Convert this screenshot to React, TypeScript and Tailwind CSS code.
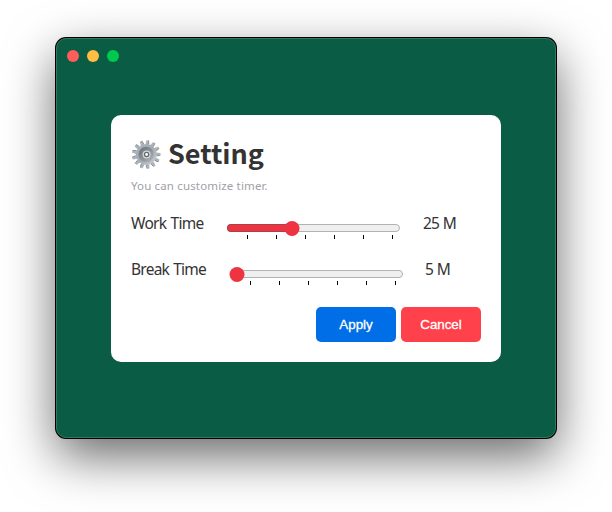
const KR = "font-['Noto_Sans','Noto_Sans_CJK_KR',sans-serif]";

const TEETH = Array.from({ length: 13 }, (_, i) => (i * 360) / 13 + 6);

function Gear() {
  return (
    <svg className="block h-[31px] w-[31px]" viewBox="0 0 31 31">
      <defs>
        <linearGradient id="rim" x1="0" y1="0" x2="1" y2="1">
          <stop offset="0" stopColor="#a9b4be" />
          <stop offset="0.5" stopColor="#a3abb2" />
          <stop offset="1" stopColor="#ccd1d5" />
        </linearGradient>
        <linearGradient id="dish" x1="0" y1="0" x2="1" y2="1">
          <stop offset="0" stopColor="#686d72" />
          <stop offset="0.5" stopColor="#8b9196" />
          <stop offset="1" stopColor="#b4babf" />
        </linearGradient>
      </defs>
      {TEETH.map((a) => (
        <g key={a} transform={`rotate(${a} 15.2 15.5)`}>
          <path d="M13.4 6 L13.9 1.2 H16.3 L17 6Z" fill="#a9b6c2" />
          <path d="M16.2 1.3 L16.8 5" stroke="#806c5c" strokeWidth="0.6" />
        </g>
      ))}
      <circle cx="15.2" cy="15.5" r="10.4" fill="url(#rim)" />
      <circle cx="15.2" cy="15.5" r="7.7" fill="url(#dish)" />
      <circle cx="15.6" cy="15.5" r="4" fill="#d3d9dd" />
      <circle cx="15.6" cy="15.5" r="2.1" fill="#fff" stroke="#666a6e" strokeWidth="1.3" />
    </svg>
  );
}

function Slider({ filled, thumb }: { filled: boolean; thumb: number }) {
  return (
    <div className="relative h-4 w-[173px] pt-1">
      <div className="h-2 overflow-hidden rounded-full border border-[#b2b2b2] bg-[#efefef]" />
      {filled && (
        <div
          className="absolute top-1 left-0 h-2 rounded-l-full border border-r-0 border-[#a3444c] bg-[#ee3440]"
          style={{ width: thumb }}
        />
      )}
      <div
        className="absolute top-[0.5px] h-[15px] w-[15px] -translate-x-1/2 rounded-full bg-[#ee3440]"
        style={{ left: thumb }}
      />
      <div className="absolute top-[15px] left-5 flex gap-7">
        {[0, 1, 2, 3, 4, 5].map((n) => (
          <i key={n} className="block h-1 w-px bg-black" />
        ))}
      </div>
    </div>
  );
}

export default function App() {
  return (
    <div className="h-[512px] w-[612px] overflow-hidden bg-white pt-[38px] pl-14">
      <main className="h-[400px] w-[500px] rounded-[10px] border border-[#37755f] bg-[#0b5c44] shadow-[0_0_0_1px_#000,0_18px_50px_rgba(0,0,0,0.6)]">
        <div className="flex gap-2 pt-[11px] pl-[10px]">
          <span className="h-3 w-3 rounded-full bg-[#ff5c5c]" />
          <span className="h-3 w-3 rounded-full bg-[#ffbd44]" />
          <span className="h-3 w-3 rounded-full bg-[#00ca4e]" />
        </div>
        <section className={`mt-[53px] ml-[54px] h-[247px] w-[390px] rounded-[10px] bg-white pt-5 pr-5 pl-5 text-[#333] ${KR}`}>
          <div className="flex h-[38px] items-center gap-[6px]">
            <Gear />
            <h1 className="-mt-[3px] font-['Noto_Sans_CJK_KR',sans-serif] text-[27px] leading-[38px] font-bold">Setting</h1>
          </div>
          <p className="mt-[4px] text-[11.5px] leading-[18px] tracking-[0.15px] text-[#a0a0a8]">You can customize timer.</p>
          <div className="mt-[18px] flex h-[20px]">
            <span className="w-24 text-[15.5px] leading-5 tracking-[-0.7px] whitespace-nowrap [word-spacing:0.8px]">Work Time</span>
            <div className="mt-[7px]"><Slider filled thumb={65} /></div>
            <span className="ml-[23px] text-[15.5px] leading-5 tracking-[-0.8px] whitespace-nowrap [word-spacing:0.5px]">25 M</span>
          </div>
          <div className="mt-[26px] flex h-[20px]">
            <span className="w-[99px] text-[15.5px] leading-5 tracking-[-0.75px] whitespace-nowrap [word-spacing:0.8px]">Break Time</span>
            <div className="mt-[7px]"><Slider filled={false} thumb={7} /></div>
            <span className="ml-[22px] text-[15.5px] leading-5 tracking-[-0.6px] whitespace-nowrap">5 M</span>
          </div>
          <div className="mt-[28px] flex justify-end gap-[5px] font-['Liberation_Sans',Arial,sans-serif] text-[13.33px] text-white [-webkit-text-stroke:0.3px_white]">
            <button className="h-[35px] w-20 rounded-[5px] bg-[#006ee6]">Apply</button>
            <button className="h-[35px] w-20 rounded-[5px] bg-[#ff414b]">Cancel</button>
          </div>
        </section>
      </main>
    </div>
  );
}
